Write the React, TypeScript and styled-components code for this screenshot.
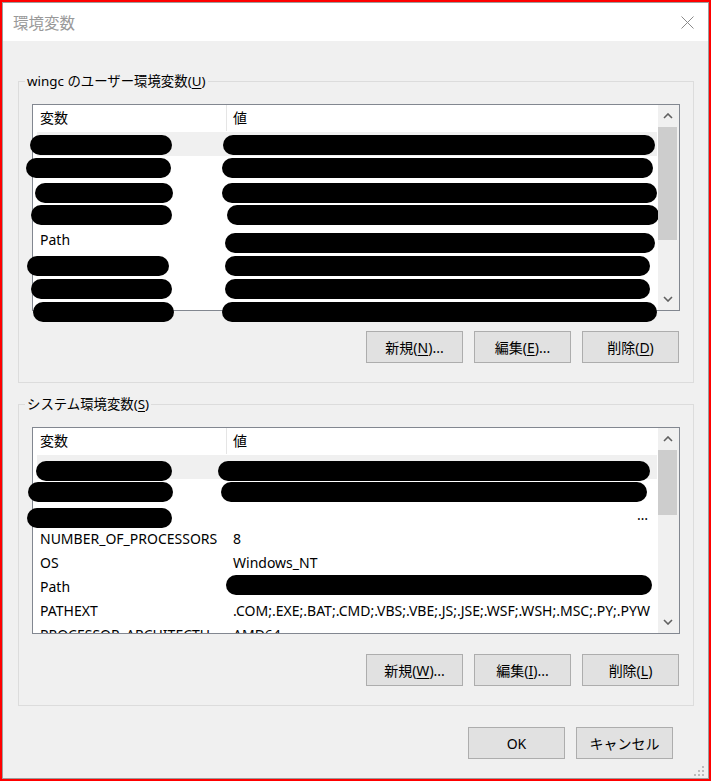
import styled, { createGlobalStyle } from 'styled-components';

const GlobalStyle = createGlobalStyle`
  html, body {
    margin: 0;
    padding: 0;
  }
  body {
    font-family: "Noto Sans", "Noto Sans CJK JP", sans-serif;
    background: #ffffff;
    overflow: hidden;
  }
`;

const Frame = styled.div`
  width: 711px;
  height: 781px;
  box-sizing: border-box;
  border: 2px solid #ff0000;
`;

const Window = styled.div`
  position: relative;
  height: 100%;
  box-sizing: border-box;
  border: 1px solid #9d9d9d;
  background: #f0f0f0;
  display: flex;
  flex-direction: column;
`;

const TitleBar = styled.div`
  height: 38px;
  flex-shrink: 0;
  background: #ffffff;
  display: flex;
  align-items: center;
  justify-content: space-between;
  padding: 0 14px 0 10px;
`;

const Title = styled.span`
  font-family: "Noto Sans CJK JP", sans-serif;
  font-size: 15.5px;
  color: #999999;
`;

const Body = styled.div`
  padding: 32px 14px 0 15px;
  display: flex;
  flex-direction: column;
`;

const Group = styled.fieldset<{ $gap?: number }>`
  margin: ${(p) => p.$gap ?? 0}px 0 0;
  padding: 0 13px 19px;
  border: 1px solid #dcdcdc;
  min-width: 0;
`;

const Legend = styled.legend`
  margin-left: -7px;
  padding: 0 2px;
  font-size: 13.4px;
  line-height: 17px;
  color: #000000;
`;

const Key = styled.span`
  text-decoration: underline;
  text-underline-offset: 2px;
`;

const ListBox = styled.div`
  margin-top: 14px;
  height: 207px;
  box-sizing: border-box;
  border: 1px solid #828790;
  background: #ffffff;
  display: flex;
`;

const ListMain = styled.div<{ $clip?: boolean }>`
  flex: 1;
  min-width: 0;
  display: flex;
  flex-direction: column;
  overflow-x: visible;
  overflow-y: ${(p) => (p.$clip ? 'clip' : 'visible')};
`;

const HeaderRow = styled.div`
  display: grid;
  grid-template-columns: 194px 1fr;
  height: 26px;
  flex-shrink: 0;
`;

const HeaderCell = styled.div<{ $first?: boolean }>`
  box-sizing: border-box;
  font-size: 14px;
  line-height: 26px;
  color: #000000;
  padding-left: ${(p) => (p.$first ? 7 : 6)}px;
  border-right: ${(p) => (p.$first ? '1px solid #e5e5e5' : 'none')};
`;

const Rows = styled.div`
  padding: 1px 1px 0 4px;
`;

const Row = styled.div<{ $selected?: boolean }>`
  display: grid;
  grid-template-columns: 189px 1fr;
  height: 24px;
  background: ${(p) => (p.$selected ? '#f0f0f0' : 'transparent')};
`;

const Cell = styled.div<{ $pad: number; $right?: boolean }>`
  padding-left: ${(p) => p.$pad}px;
  padding-right: ${(p) => (p.$right ? 9 : 0)}px;
  text-align: ${(p) => (p.$right ? 'right' : 'left')};
  font-size: 14px;
  line-height: 24px;
  color: #000000;
  white-space: nowrap;
  min-width: 0;
`;

const Redact = styled.span<{ $x: number; $y: number; $w: number }>`
  display: block;
  width: ${(p) => p.$w}px;
  height: 20px;
  margin: ${(p) => p.$y}px 0 0 ${(p) => p.$x}px;
  border-radius: 10px;
  background: #000000;
`;

const ScrollBar = styled.div`
  width: 21px;
  flex-shrink: 0;
  background: #f0f0f0;
  display: flex;
  flex-direction: column;
`;

const ArrowBtn = styled.div`
  height: 22px;
  flex-shrink: 0;
  display: flex;
  align-items: center;
  justify-content: center;
  padding-right: 1px;
`;

const Track = styled.div`
  flex: 1;
`;

const Thumb = styled.div<{ $top: number; $h: number }>`
  margin: ${(p) => p.$top}px 2px 0 0;
  height: ${(p) => p.$h}px;
  background: #cdcdcd;
`;

const Buttons = styled.div`
  display: flex;
  justify-content: flex-end;
  gap: 11px;
  margin-top: 20px;
  padding-right: 1px;
`;

const Footer = styled(Buttons)`
  margin-top: 21px;
  padding-right: 21px;
`;

const Button = styled.button`
  width: 97px;
  height: 32px;
  box-sizing: border-box;
  padding: 0;
  border: 1px solid #adadad;
  background: #e1e1e1;
  font-family: "Noto Sans", "Noto Sans CJK JP", sans-serif;
  font-size: 14px;
  color: #000000;
`;

const Grip = styled.svg`
  position: absolute;
  right: 3px;
  bottom: 1px;
`;

type Pill = { x: number; y: number; w: number };
type CellData = string | Pill;
type RowData = { name: CellData; value: CellData; selected?: boolean; right?: boolean };

const userRows: RowData[] = [
  { name: { x: -7, y: 3, w: 142 }, value: { x: -3, y: 3, w: 432 }, selected: true },
  { name: { x: -11, y: 2, w: 145 }, value: { x: -4, y: 2, w: 431 } },
  { name: { x: -2, y: 3, w: 138 }, value: { x: -4, y: 3, w: 435 } },
  { name: { x: -6, y: 1, w: 141 }, value: { x: 1, y: 1, w: 432 } },
  { name: 'Path', value: { x: -1, y: 5, w: 430 } },
  { name: { x: -10, y: 4, w: 142 }, value: { x: -1, y: 4, w: 425 } },
  { name: { x: -6, y: 3, w: 141 }, value: { x: -1, y: 3, w: 425 } },
  { name: { x: -4, y: 2, w: 141 }, value: { x: -4, y: 2, w: 435 } },
];

const systemRows: RowData[] = [
  { name: { x: -1, y: 6, w: 136 }, value: { x: -8, y: 6, w: 432 }, selected: true },
  { name: { x: -9, y: 3, w: 145 }, value: { x: -5, y: 3, w: 426 } },
  { name: { x: -10, y: 5, w: 145 }, value: '…', right: true },
  { name: 'NUMBER_OF_PROCESSORS', value: '8' },
  { name: 'OS', value: 'Windows_NT' },
  { name: 'Path', value: { x: 0, y: 0, w: 426 } },
  { name: 'PATHEXT', value: '.COM;.EXE;.BAT;.CMD;.VBS;.VBE;.JS;.JSE;.WSF;.WSH;.MSC;.PY;.PYW' },
  { name: 'PROCESSOR_ARCHITECTU...', value: 'AMD64' },
];

const Chevron = ({ up }: { up?: boolean }) => (
  <svg width="10" height="6" viewBox="0 0 10 6">
    <polyline
      points={up ? '1,5 5,1 9,5' : '1,1 5,5 9,1'}
      fill="none"
      stroke="#606060"
      strokeWidth="1.6"
    />
  </svg>
);

const CloseIcon = () => (
  <svg width="13" height="13" viewBox="0 0 13 13">
    <path d="M0.5 0.5 L12.5 12.5 M12.5 0.5 L0.5 12.5" stroke="#8a8a8a" strokeWidth="1" />
  </svg>
);

const renderCell = (c: CellData, pad: number, right?: boolean) => (
  <Cell $pad={typeof c === 'string' ? pad : 0} $right={right}>
    {typeof c === 'string' ? c : <Redact $x={c.x} $y={c.y} $w={c.w} />}
  </Cell>
);

const VarList = ({
  rows,
  thumbH,
  clip,
}: {
  rows: RowData[];
  thumbH: number;
  clip?: boolean;
}) => (
  <ListBox>
    <ListMain $clip={clip}>
      <HeaderRow>
        <HeaderCell $first>変数</HeaderCell>
        <HeaderCell>値</HeaderCell>
      </HeaderRow>
      <Rows>
        {rows.map((r, i) => (
          <Row key={i} $selected={r.selected}>
            {renderCell(r.name, 3)}
            {renderCell(r.value, 7, r.right)}
          </Row>
        ))}
      </Rows>
    </ListMain>
    <ScrollBar>
      <ArrowBtn>
        <Chevron up />
      </ArrowBtn>
      <Track>
        <Thumb $top={0} $h={thumbH} />
      </Track>
      <ArrowBtn>
        <Chevron />
      </ArrowBtn>
    </ScrollBar>
  </ListBox>
);

const App = () => {
  return (
    <Frame>
      <GlobalStyle />
      <Window>
        <TitleBar>
          <Title>環境変数</Title>
          <CloseIcon />
        </TitleBar>
        <Body>
          <Group>
            <Legend>
              wingc のユーザー環境変数(<Key>U</Key>)
            </Legend>
            <VarList rows={userRows} thumbH={113} />
            <Buttons>
              <Button>
                新規(<Key>N</Key>)...
              </Button>
              <Button>
                編集(<Key>E</Key>)...
              </Button>
              <Button>
                削除(<Key>D</Key>)
              </Button>
            </Buttons>
          </Group>
          <Group $gap={13}>
            <Legend>
              システム環境変数(<Key>S</Key>)
            </Legend>
            <VarList rows={systemRows} thumbH={65} clip />
            <Buttons>
              <Button>
                新規(<Key>W</Key>)...
              </Button>
              <Button>
                編集(<Key>I</Key>)...
              </Button>
              <Button>
                削除(<Key>L</Key>)
              </Button>
            </Buttons>
          </Group>
          <Footer>
            <Button>OK</Button>
            <Button>キャンセル</Button>
          </Footer>
        </Body>
        <Grip width="12" height="12" viewBox="0 0 12 12">
          <g fill="#bcbcbc">
            <rect x="9" y="1" width="2" height="2" />
            <rect x="5" y="5" width="2" height="2" />
            <rect x="9" y="5" width="2" height="2" />
            <rect x="1" y="9" width="2" height="2" />
            <rect x="5" y="9" width="2" height="2" />
            <rect x="9" y="9" width="2" height="2" />
          </g>
        </Grip>
      </Window>
    </Frame>
  );
};

export default App;
